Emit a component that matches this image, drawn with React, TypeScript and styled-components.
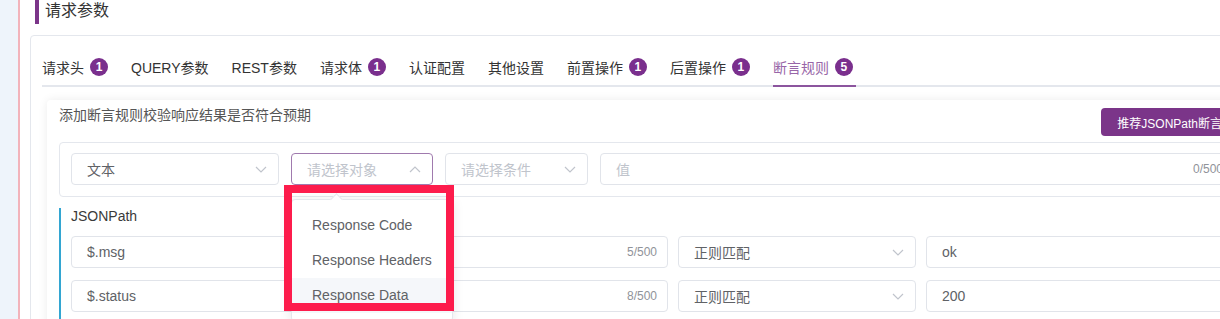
import React from 'react';
import styled, { createGlobalStyle, css } from 'styled-components';

// ─────────────────────────────────────────────────────────────────
// Global
// ─────────────────────────────────────────────────────────────────

const GlobalStyle = createGlobalStyle`
  html, body {
    margin: 0;
    padding: 0;
    background: #ffffff;
    overflow: hidden;
  }
  #root {
    width: 1220px;
    height: 319px;
    overflow: hidden;
  }
  * {
    box-sizing: border-box;
  }
`;

const FONT = `'Liberation Sans', 'Noto Sans CJK SC', sans-serif`;

// ─────────────────────────────────────────────────────────────────
// Layout
// ─────────────────────────────────────────────────────────────────

const Page = styled.div`
  display: flex;
  height: 319px;
  font-family: ${FONT};
  color: #333333;
`;

const SideStrip = styled.div`
  flex: 0 0 18px;
  background-color: #eef4fb;
`;

const Main = styled.div`
  flex: 0 0 auto;
  width: 1290px;
  border-left: 2px solid #f2b3bb;
  padding-left: 10px;
`;

const SectionTitle = styled.h2`
  margin: 0 0 11px 5px;
  padding-left: 6px;
  border-left: 4px solid #7b3589;
  height: 24px;
  line-height: 22px;
  font-size: 16px;
  font-weight: 400;
  color: #333333;
`;

const Card = styled.div`
  width: 1245px;
  height: 300px;
  border: 1px solid #e4e7ed;
  border-radius: 4px;
  padding: 13px 0 0 0;
`;

// ─────────────────────────────────────────────────────────────────
// Tabs
// ─────────────────────────────────────────────────────────────────

const TabNav = styled.div`
  display: flex;
  gap: 23px;
  margin: 0 0 0 11px;
  border-bottom: 2px solid #e4e7ed;
`;

const Tab = styled.div<{ $active?: boolean }>`
  position: relative;
  display: flex;
  align-items: center;
  gap: 6px;
  height: 36px;
  font-size: 14px;
  color: ${(p) => (p.$active ? '#9866a8' : '#333333')};

  ${(p) =>
    p.$active &&
    css`
      &::after {
        content: '';
        position: absolute;
        left: 0;
        right: -3px;
        bottom: -2px;
        height: 2px;
        background-color: #8c559e;
      }
    `}
`;

const Badge = styled.span`
  display: inline-flex;
  align-items: center;
  justify-content: center;
  width: 18px;
  height: 18px;
  border-radius: 50%;
  background-color: #7a2f8d;
  color: #ffffff;
  font-size: 12px;
  font-weight: 700;
`;

// ─────────────────────────────────────────────────────────────────
// Assertion panel
// ─────────────────────────────────────────────────────────────────

const Panel = styled.div`
  margin: 13px 16px 0 16px;
  padding: 8px 12px 0 12px;
  height: 240px;
  background-color: #ffffff;
  border-radius: 4px;
  box-shadow: 0 0 10px rgba(0, 0, 0, 0.08);
`;

const PanelHeader = styled.div`
  display: flex;
  align-items: flex-start;
  justify-content: space-between;
  height: 28px;
  margin-bottom: 6px;
`;

const Hint = styled.p`
  margin: 0;
  font-size: 14px;
  line-height: 14px;
  color: #555555;
`;

const PrimaryButton = styled.button`
  height: 28px;
  margin-right: 8px;
  padding: 0 16px;
  border: none;
  border-radius: 4px;
  background-color: #7b3589;
  color: #ffffff;
  font-family: ${FONT};
  font-size: 12px;
`;

const FilterBox = styled.div`
  display: flex;
  gap: 12px;
  padding: 10px 11px 11px 11px;
  border: 1px solid #e4e7ed;
  border-radius: 4px;
`;

const Field = styled.div<{ $width?: number; $focused?: boolean }>`
  position: relative;
  display: flex;
  align-items: center;
  justify-content: space-between;
  height: 32px;
  padding: 0 10px 0 15px;
  border: 1px solid ${(p) => (p.$focused ? '#a07aae' : '#e1e4ea')};
  border-radius: 4px;
  background-color: #ffffff;
  font-size: 14px;
  color: #606266;
  ${(p) => (p.$width ? `width: ${p.$width}px; flex: 0 0 auto;` : 'flex: 1 1 auto;')}
`;

const FieldText = styled.span<{ $placeholder?: boolean }>`
  color: ${(p) => (p.$placeholder ? '#c0c4cc' : '#606266')};
`;

const Counter = styled.span`
  font-size: 12px;
  color: #909399;
`;

const SelectWrap = styled.div`
  position: relative;
  display: flex;
`;

const Chevron: React.FC<{ up?: boolean }> = ({ up }) => (
  <svg width="12" height="7" viewBox="0 0 12 7" style={{ marginRight: 1 }}>
    <path
      d={up ? 'M1 6 L6 1 L11 6' : 'M1 1 L6 6 L11 1'}
      fill="none"
      stroke="#c0c4cc"
      strokeWidth="1.2"
    />
  </svg>
);

// ─────────────────────────────────────────────────────────────────
// Dropdown + annotation
// ─────────────────────────────────────────────────────────────────

const Dropdown = styled.ul`
  position: absolute;
  top: 46px;
  left: 0;
  z-index: 10;
  margin: 0;
  padding: 8px 0;
  list-style: none;
  background-color: #ffffff;
  border: 1px solid #e4e7ed;
  border-radius: 4px;
  box-shadow: 0 2px 12px rgba(0, 0, 0, 0.1);
  white-space: nowrap;

  &::before {
    content: '';
    position: absolute;
    top: -5px;
    left: 40px;
    width: 8px;
    height: 8px;
    background-color: #ffffff;
    border-top: 1px solid #e4e7ed;
    border-left: 1px solid #e4e7ed;
    transform: rotate(45deg);
  }
`;

const DropdownItem = styled.li<{ $hover?: boolean }>`
  height: 35px;
  line-height: 35px;
  padding: 0 20px;
  font-size: 14px;
  color: #606266;
  background-color: ${(p) => (p.$hover ? '#f5f7fa' : 'transparent')};
`;

const Annotation = styled.div`
  position: absolute;
  top: 32px;
  left: -7px;
  z-index: 20;
  width: 170px;
  height: 126px;
  border: 8px solid #fd1c4c;
  pointer-events: none;
`;

// ─────────────────────────────────────────────────────────────────
// JSONPath rules
// ─────────────────────────────────────────────────────────────────

const RuleSection = styled.div`
  margin-top: 11px;
  padding-left: 10px;
  border-left: 2px solid #33a6d2;
  height: 120px;
`;

const SectionLabel = styled.div`
  font-size: 14px;
  line-height: 17px;
  color: #3a3a3a;
  margin-bottom: 11px;
`;

const RuleRow = styled.div`
  display: flex;
  gap: 10px;
  margin-bottom: 12px;
`;

// ─────────────────────────────────────────────────────────────────
// Data
// ─────────────────────────────────────────────────────────────────

const tabs: { label: string; count?: number; active?: boolean }[] = [
  { label: '请求头', count: 1 },
  { label: 'QUERY参数' },
  { label: 'REST参数' },
  { label: '请求体', count: 1 },
  { label: '认证配置' },
  { label: '其他设置' },
  { label: '前置操作', count: 1 },
  { label: '后置操作', count: 1 },
  { label: '断言规则', count: 5, active: true },
];

const rules = [
  { path: '$.msg', count: '5/500', match: '正则匹配', value: 'ok' },
  { path: '$.status', count: '8/500', match: '正则匹配', value: '200' },
];

const targets = ['Response Code', 'Response Headers', 'Response Data'];

// ─────────────────────────────────────────────────────────────────
// Component
// ─────────────────────────────────────────────────────────────────

const App: React.FC = () => {
  return (
    <Page>
      <GlobalStyle />
      <SideStrip />
      <Main>
        <SectionTitle>请求参数</SectionTitle>
        <Card>
          <TabNav>
            {tabs.map((t) => (
              <Tab key={t.label} $active={t.active}>
                {t.label}
                {t.count !== undefined && <Badge>{t.count}</Badge>}
              </Tab>
            ))}
          </TabNav>

          <Panel>
            <PanelHeader>
              <Hint>添加断言规则校验响应结果是否符合预期</Hint>
              <PrimaryButton>推荐JSONPath断言</PrimaryButton>
            </PanelHeader>

            <FilterBox>
              <Field $width={208}>
                <FieldText>文本</FieldText>
                <Chevron />
              </Field>
              <SelectWrap>
                <Field $width={142} $focused>
                  <FieldText $placeholder>请选择对象</FieldText>
                  <Chevron up />
                </Field>
                <Dropdown>
                  {targets.map((t, i) => (
                    <DropdownItem key={t} $hover={i === targets.length - 1}>
                      {t}
                    </DropdownItem>
                  ))}
                </Dropdown>
                <Annotation />
              </SelectWrap>
              <Field $width={143}>
                <FieldText $placeholder>请选择条件</FieldText>
                <Chevron />
              </Field>
              <Field>
                <FieldText $placeholder>值</FieldText>
                <Counter>0/500</Counter>
              </Field>
            </FilterBox>

            <RuleSection>
              <SectionLabel>JSONPath</SectionLabel>
              {rules.map((r) => (
                <RuleRow key={r.path}>
                  <Field $width={597}>
                    <FieldText>{r.path}</FieldText>
                    <Counter>{r.count}</Counter>
                  </Field>
                  <Field $width={238}>
                    <FieldText>{r.match}</FieldText>
                    <Chevron />
                  </Field>
                  <Field>
                    <FieldText>{r.value}</FieldText>
                  </Field>
                </RuleRow>
              ))}
            </RuleSection>
          </Panel>
        </Card>
      </Main>
    </Page>
  );
};

export default App;
